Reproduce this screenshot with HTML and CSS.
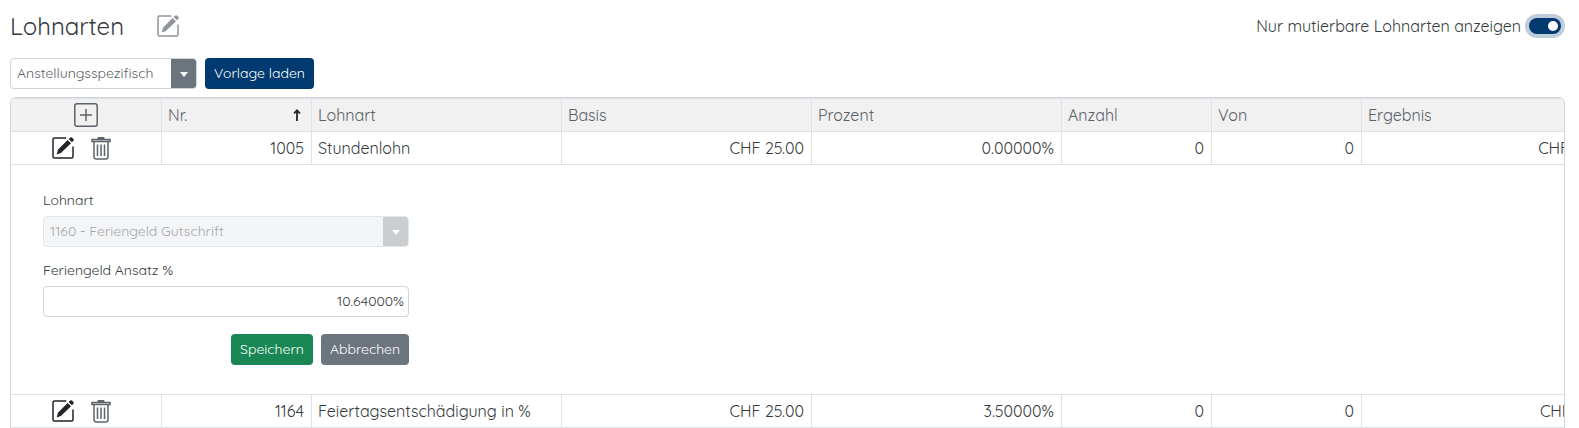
FILE: index.html
```
<!DOCTYPE html>
<html lang="de">
<head>
<meta charset="utf-8">
<title>Lohnarten</title>
<link rel="stylesheet" href="styles.css">
</head>
<body>
<svg class="sprite" aria-hidden="true">
  <symbol id="pencil" viewBox="0 0 22 22">
    <path d="M14.2 1H2.5Q1 1 1 2.500V19.500Q1 21 2.500 21H19.500Q21 21 21 19.500V9.500" fill="none" stroke="currentColor" stroke-width="1.500"/>
    <path d="M15.600 2.900L19 6.300L8.900 16L4.600 17.500L6.100 12.600ZM16.600 2L18.300 .5Q19.100 -.2 20 .6L21.400 2Q22.100 2.900 21.400 3.700L19.900 5.300Z" fill="currentColor"/>
  </symbol>
  <symbol id="trash" viewBox="0 0 20 23">
    <path d="M1 2.500H19V4.500H1ZM3 5V19.700Q3 22 5.300 22H14.700Q17 22 17 19.700V5M6.500 7.500V19M10 7.500V19M13.500 7.500V19" fill="none" stroke="currentColor" stroke-width="1.500"/>
    <path d="M6.500 2V1Q6.500 0 7.500 0H12.500Q13.500 0 13.500 1V2Z" fill="currentColor"/>
  </symbol>
</svg>
<header class="top">
  <h1 class="title">Lohnarten</h1>
  <svg class="icon-pencil muted"><use href="#pencil"/></svg>
  <span class="switch-label">Nur mutierbare Lohnarten anzeigen</span>
  <span class="switch"></span>
</header>
<div class="toolbar">
  <div class="select template"><span class="value">Anstellungsspezifisch</span><span class="arrow"></span></div>
  <button class="btn primary">Vorlage laden</button>
</div>
<main class="grid">
  <div class="row head">
    <div class="cell center"><svg class="icon-plus" viewBox="0 0 24 24"><path d="M3 .8H21Q23.200 .8 23.200 3V21Q23.200 23.200 21 23.200H3Q.8 23.200 .8 21V3Q.8 .8 3 .8ZM6 12H18M12 6V18" fill="none" stroke="currentColor" stroke-width="1.500"/></svg></div>
    <div class="cell between"><span>Nr.</span><svg class="sort" viewBox="0 0 8 12"><path d="M4 12V1.500M1 4.500L4 1.300L7 4.500" fill="none" stroke="currentColor" stroke-width="1.800"/></svg></div>
    <div class="cell">Lohnart</div>
    <div class="cell">Basis</div>
    <div class="cell">Prozent</div>
    <div class="cell">Anzahl</div>
    <div class="cell">Von</div>
    <div class="cell">Ergebnis</div>
  </div>
  <div class="row">
    <div class="cell actions"><svg class="icon-pencil"><use href="#pencil"/></svg><svg class="icon-trash"><use href="#trash"/></svg></div>
    <div class="cell num">1005</div>
    <div class="cell">Stundenlohn</div>
    <div class="cell num">CHF 25.00</div>
    <div class="cell num">0.00000%</div>
    <div class="cell num">0</div>
    <div class="cell num">0</div>
    <div class="cell num">CHF 0.00</div>
  </div>
  <section class="detail">
    <div class="form">
      <label class="label">Lohnart</label>
      <div class="select disabled"><span class="value">1160 - Feriengeld Gutschrift</span><span class="arrow"></span></div>
      <label class="label second">Feriengeld Ansatz %</label>
      <div class="input">10.64000%</div>
      <div class="buttons"><button class="btn success">Speichern</button><button class="btn secondary">Abbrechen</button></div>
    </div>
  </section>
  <div class="row">
    <div class="cell actions"><svg class="icon-pencil"><use href="#pencil"/></svg><svg class="icon-trash"><use href="#trash"/></svg></div>
    <div class="cell num">1164</div>
    <div class="cell">Feiertagsentschädigung in %</div>
    <div class="cell num">CHF 25.00</div>
    <div class="cell num">3.50000%</div>
    <div class="cell num">0</div>
    <div class="cell num">0</div>
    <div class="cell num">CHF 0.88</div>
  </div>
</main>
</body>
</html>
```
FILE: styles.css
```
* { box-sizing: border-box; }
body {
  margin: 0;
  height: 428px;
  overflow: hidden;
  padding: 0 14px 0 10px;
  background: #fff;
  color: #343a40;
  font: 400 16px/24px Quicksand, Lato, sans-serif;
}
.sprite { display: none; }
svg { display: block; flex: none; }
.top { display: flex; align-items: center; height: 52px; padding-right: 4px; }
.title { margin: 0; width: 147px; font-size: 24px; font-weight: 400; line-height: 30px; }
.icon-pencil { width: 22px; height: 22px; color: #212529; }
.icon-pencil.muted { color: #90959a; }
.switch-label { margin-left: auto; margin-right: 8px; }
.switch {
  width: 32px;
  height: 16px;
  padding: 3px;
  border-radius: 8px;
  background: #003a70;
  box-shadow: 0 0 0 4px #bfcddb;
}
.switch::after { content: ""; display: block; width: 10px; height: 10px; margin-left: 16px; border-radius: 50%; background: #fff; }
.toolbar { display: flex; gap: 8px; height: 45px; padding-top: 6px; }
.select {
  display: flex;
  height: 31px;
  overflow: hidden;
  border: 1px solid #ced4da;
  border-radius: 4px;
  font-size: 14px;
}
.template { width: 187px; }
.value { flex: 1; padding-left: 6px; line-height: 28px; white-space: nowrap; color: #5a6067; }
.arrow { display: grid; place-items: center; width: 25px; background: #6c757d; }
.arrow::after { content: ""; border: 4px solid transparent; border-top: 5px solid #fff; border-bottom: 0; margin-top: 2px; }
.btn {
  height: 31px;
  padding: 0;
  border: 0;
  border-radius: 4px;
  color: #fff;
  font: 400 14px/29px Quicksand, Lato, sans-serif;
}
.primary { width: 109px; background: #003a70; }
.success { width: 82px; background: #198754; }
.secondary { width: 88px; background: #6c757d; }
.grid {
  width: 1555px;
  height: 331px;
  overflow: hidden;
  border: 1px solid #ced4da;
  border-bottom: 0;
  border-radius: 6px 6px 0 0;
}
.row {
  display: grid;
  grid-template-columns: 151px 150px 250px 250px 250px 150px 150px 250px;
  width: 1601px;
  height: 33px;
  border-bottom: 1px solid #dee2e6;
}
.head { height: 34px; border-top: 1px solid #dee2e6; background: #f1f1f1; color: #5a6067; }
.cell { display: flex; align-items: center; padding: 0 6px; border-right: 1px solid #dee2e6; white-space: nowrap; }
.center { justify-content: center; }
.between { justify-content: space-between; }
.num { justify-content: flex-end; padding-right: 7px; }
.num:last-child { padding-right: 6px; }
.icon-plus { width: 24px; height: 24px; color: #5c636a; }
.sort { width: 8px; height: 12px; margin-right: 4px; color: #212529; }
.actions { gap: 17px; padding-left: 41px; }
.icon-trash { width: 20px; height: 23px; color: #5c636a; }
.detail { height: 230px; padding: 25px 32px 0; border-bottom: 1px solid #dee2e6; }
.form { width: 366px; }
.label { display: block; height: 26px; font-size: 14px; line-height: 21px; }
.second { margin-top: 13px; }
.disabled { border-color: #e4e7ea; background: #f4f5f7; }
.disabled .value { color: #a4a7aa; }
.disabled .arrow { background: #caced1; }
.input { height: 31px; padding-right: 4px; border: 1px solid #ced4da; border-radius: 4px; text-align: right; font-size: 14px; line-height: 29px; }
.buttons { display: flex; justify-content: flex-end; gap: 8px; margin-top: 17px; }
```
